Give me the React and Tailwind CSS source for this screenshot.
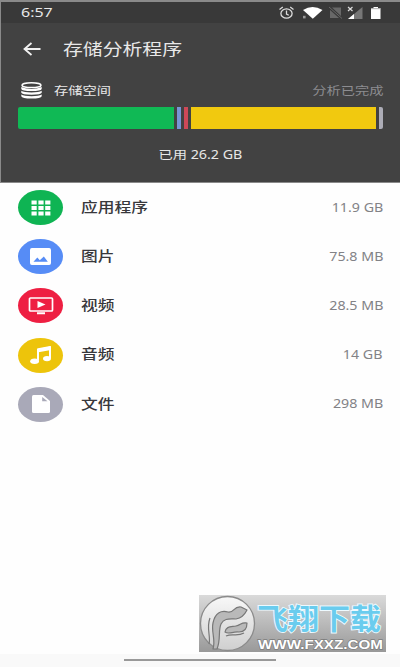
const categories = [
    { name: '应用程序', size: '11.9 GB', color: 'bg-[#0fb453]', icon: AppsIcon },
    { name: '图片', size: '75.8 MB', color: 'bg-[#568cf6]', icon: ImageIcon },
    { name: '视频', size: '28.5 MB', color: 'bg-[#ee1f42]', icon: VideoIcon },
    { name: '音频', size: '14 GB', color: 'bg-[#edc40b]', icon: MusicIcon },
    { name: '文件', size: '298 MB', color: 'bg-[#a9a9b8]', icon: FileIcon },
];

function AppsIcon() {
    return (
        <svg width="20" height="16" viewBox="0 0 20 16" fill="#fff">
            {[0, 5.5, 11].map((y) => [0.5, 7.4, 14.2].map((x) => (
                <rect key={`${x}-${y}`} x={x} y={y + 0.5} width="5.2" height="4" />
            )))}
        </svg>
    );
}

function ImageIcon() {
    return (
        <svg width="21" height="17" viewBox="0 0 20 16">
            <rect width="20" height="16" rx="1.8" fill="#fff" />
            <path d="M3.3 13 L7 9 L9.3 11.5 L13.2 8 L17 13 Z" fill="#568cf6" />
        </svg>
    );
}

function VideoIcon() {
    return (
        <svg width="26" height="18" viewBox="0 0 26 18">
            <rect x="1.5" y="1" width="23" height="13" rx="1" fill="none" stroke="#fff" strokeWidth="1.7" />
            <path d="M9.5 4 L17.5 7.5 L9.5 11 Z M9 15.2 H17 V17.2 H9 Z" fill="#fff" />
        </svg>
    );
}

function MusicIcon() {
    return (
        <svg width="22" height="18" viewBox="0 0 22 18">
            <path d="M8 14.5 V4 L20 1.5 V12" fill="none" stroke="#fff" strokeWidth="2" />
            <path d="M7 3.2 Q7 2.4 8 2.2 L20 0 Q21 0 21 1 V4 L7 6.4 Z" fill="#fff" />
            <ellipse cx="4.6" cy="15.2" rx="4.4" ry="2.7" fill="#fff" />
            <ellipse cx="17" cy="12.6" rx="4" ry="2.6" fill="#fff" />
        </svg>
    );
}

function FileIcon() {
    return (
        <svg width="18" height="18" viewBox="0 0 18 18">
            <path d="M1.5 0 H11 L18 6 V16.5 Q18 18 16.5 18 H1.5 Q0 18 0 16.5 V1.5 Q0 0 1.5 0 Z" fill="#fff" />
            <path d="M10.2 2 V6.2 H15.5 Z" fill="#a9a9b8" />
        </svg>
    );
}

function StorageIcon() {
    return (
        <svg width="21" height="17" viewBox="0 0 21 17">
            <ellipse cx="10.5" cy="3.2" rx="9.5" ry="2.4" fill="none" stroke="#fff" strokeWidth="1.5" />
            <g fill="#fff">
                <path d="M.3 5 Q10.5 9 20.7 5 V7 Q20 9 10.5 9 Q1 9 .3 7 Z" />
                <path d="M.3 8.8 Q3 10.4 10.5 10.4 Q18 10.4 20.7 8.8 V10.8 Q20 12.7 10.5 12.7 Q1 12.7 .3 10.8 Z" />
                <path d="M.3 12.6 Q3 14.2 10.5 14.2 Q18 14.2 20.7 12.6 V14.2 Q20 16.6 10.5 16.6 Q1 16.6 .3 14.2 Z" />
            </g>
        </svg>
    );
}

function StatusIcons() {
    return (
        <svg width="104" height="16" viewBox="0 0 104 16">
            {/* alarm */}
            <g fill="none" stroke="#ddd" strokeWidth="1.3">
                <ellipse cx="8.5" cy="8.5" rx="5.6" ry="4.7" />
                <path d="M8.5 5.5 V9 L10.8 10.3 M1.5 4.6 L4.8 2 M15.5 4.6 L12.2 2" />
            </g>
            {/* wifi */}
            <path d="M25 5 Q34.5 -1 44.5 5 L34.8 13.8 Z" fill="#fff" />
            <rect x="25" y="10.8" width="2.6" height="2.6" fill="#999" />
            {/* no sim */}
            <path d="M54 2.5 H63 V11 Z M52 5 L61 13 H52 Z" fill="#686868" />
            <path d="M51 2 L64 13.5" stroke="#686868" strokeWidth="1" />
            {/* signal */}
            <path d="M84.5 2 V14 H70 Z" fill="#777" />
            <path d="M76 9 V14 H70 Z" fill="#fff" />
            <path d="M70 2 L74.5 6 M74.5 2 L70 6" stroke="#ddd" strokeWidth="1.2" />
            {/* battery */}
            <path d="M93 3.2 H95.5 V2 H100 V3.2 H102.5 V14 H93 Z" fill="#fff" />
            <path d="M93 3.7 H102.5" stroke="#aaa" />
        </svg>
    );
}

function Watermark() {
    return (
        <svg className="absolute top-[595px] left-[199px]" width="188" height="58" viewBox="0 0 188 58">
            <defs>
                <linearGradient id="plate" x1="0" y1="0" x2="0" y2="1">
                    <stop offset="0" stopColor="#dadada" />
                    <stop offset="1" stopColor="#999" />
                </linearGradient>
                <linearGradient id="disc" x1="0" y1="0" x2="0" y2="1">
                    <stop offset="0" stopColor="#f8f8f8" />
                    <stop offset="1" stopColor="#cfcfcf" />
                </linearGradient>
            </defs>
            <rect width="187" height="57" fill="url(#plate)" />
            <circle cx="28.5" cy="28.5" r="27" fill="url(#disc)" stroke="#8b8b8b" strokeWidth="1.3" />
            {/* twin flames */}
            <g fill="#b9b9b9" stroke="#777" strokeWidth="1.2" strokeLinejoin="round">
                <path d="M14 54 C17 45 12 37 14 28 C16 18 22 15 29 17 C36 18 34 11 42 12 L48 15 C46 19 43 23 37 24 C30 24 25 23 22 29 C19 36 22 44 18 54 Z" />
                <path d="M26 37 C27 31 32 32 37 31 C42 30 42 27 48 28 C48 33 46 37 40 37 C34 36 30 40 26 37 Z" />
                <path d="M10 49 C12 41 7 33 11 23" fill="none" />
                <path d="M27 41 C33 38 38 42 45 38" fill="none" />
            </g>
            <text x="58" y="34.5" textLength="124" lengthAdjust="spacingAndGlyphs" fontSize="29" fontWeight="700" fontFamily="'Noto Sans CJK SC', sans-serif" fill="#6accee" stroke="#eefaff" strokeWidth="1.8" paintOrder="stroke">飞翔下载</text>
            <text x="59" y="53.5" textLength="125" lengthAdjust="spacingAndGlyphs" fontSize="13.5" fontWeight="700" fontFamily="'Liberation Sans', sans-serif" fill="#fff" stroke="#7c7c7c" strokeWidth="1.3" paintOrder="stroke">WWW.FXXZ.COM</text>
        </svg>
    );
}

export default function App() {
    return (
        <div className="relative flex h-[667px] w-[400px] flex-col overflow-hidden bg-[#fefefe] font-['Noto_Sans','Noto_Sans_CJK_SC',sans-serif]">
            <header className="h-[183px] shrink-0 border-t-2 border-b border-l border-[#8a8a8a] bg-[#424242] text-[#e8e8e8]">
                <div className="flex h-[21px] items-center justify-between bg-[#393939] pr-[18px] pl-5">
                    <span className="origin-left scale-x-120 text-[13.3px] leading-none">6:57</span>
                    <StatusIcons />
                </div>
                <div className="flex h-[51px] items-center pl-[22px]">
                    <svg width="18" height="14" viewBox="0 0 18 14" fill="none" stroke="#f2f2f2" strokeWidth="1.8">
                        <path d="M17.5 7 H1.5 M8.5 1 L1.5 7 L8.5 13" />
                    </svg>
                    <h1 className="ml-[22px] origin-left scale-x-124 text-[16px] leading-none">存储分析程序</h1>
                </div>
                <div className="flex h-[33px] items-center pr-[17px] pl-5">
                    <StorageIcon />
                    <span className="ml-3 origin-left scale-x-122 text-[11.7px] leading-none">存储空间</span>
                    <span className="ml-auto origin-right scale-x-122 text-[11.7px] leading-none text-[#8c8c90]">分析已完成</span>
                </div>
                <div className="mx-[17px] flex h-[22px] gap-[3px]">
                    <div className="w-[156px] rounded-l-xs bg-[#10b955]" />
                    <div className="w-1 bg-[#7795d6]" />
                    <div className="w-1 bg-[#ce4858]" />
                    <div className="flex-1 bg-[#f1c90f]" />
                    <div className="w-1 rounded-r-xs bg-[#acacb6]" />
                </div>
                <div className="flex h-[51px] items-center justify-center">
                    <span className="scale-x-122 text-[11.7px] leading-none">已用 26.2 GB</span>
                </div>
            </header>

            <ul className="flex flex-col">
                {categories.map(({ name, size, color, icon: Icon }) => (
                    <li key={name} className="flex h-[49.2px] items-center pr-[17px] pl-[18px]">
                        <div className={`flex h-[35px] w-[45px] items-center justify-center rounded-[50%] ${color}`}>
                            <Icon />
                        </div>
                        <span className="ml-[18px] origin-left scale-x-124 text-[13.5px] leading-none font-medium text-[#38383c]">{name}</span>
                        <span className="ml-auto origin-right scale-x-122 text-[11.7px] leading-none text-[#828286]">{size}</span>
                    </li>
                ))}
            </ul>

            <footer className="mt-auto flex h-[13px] justify-center bg-[#f9f9f9] pt-[5px]">
                <div className="h-0.5 w-[152px] bg-[#999]" />
            </footer>
            <Watermark />
        </div>
    );
}
